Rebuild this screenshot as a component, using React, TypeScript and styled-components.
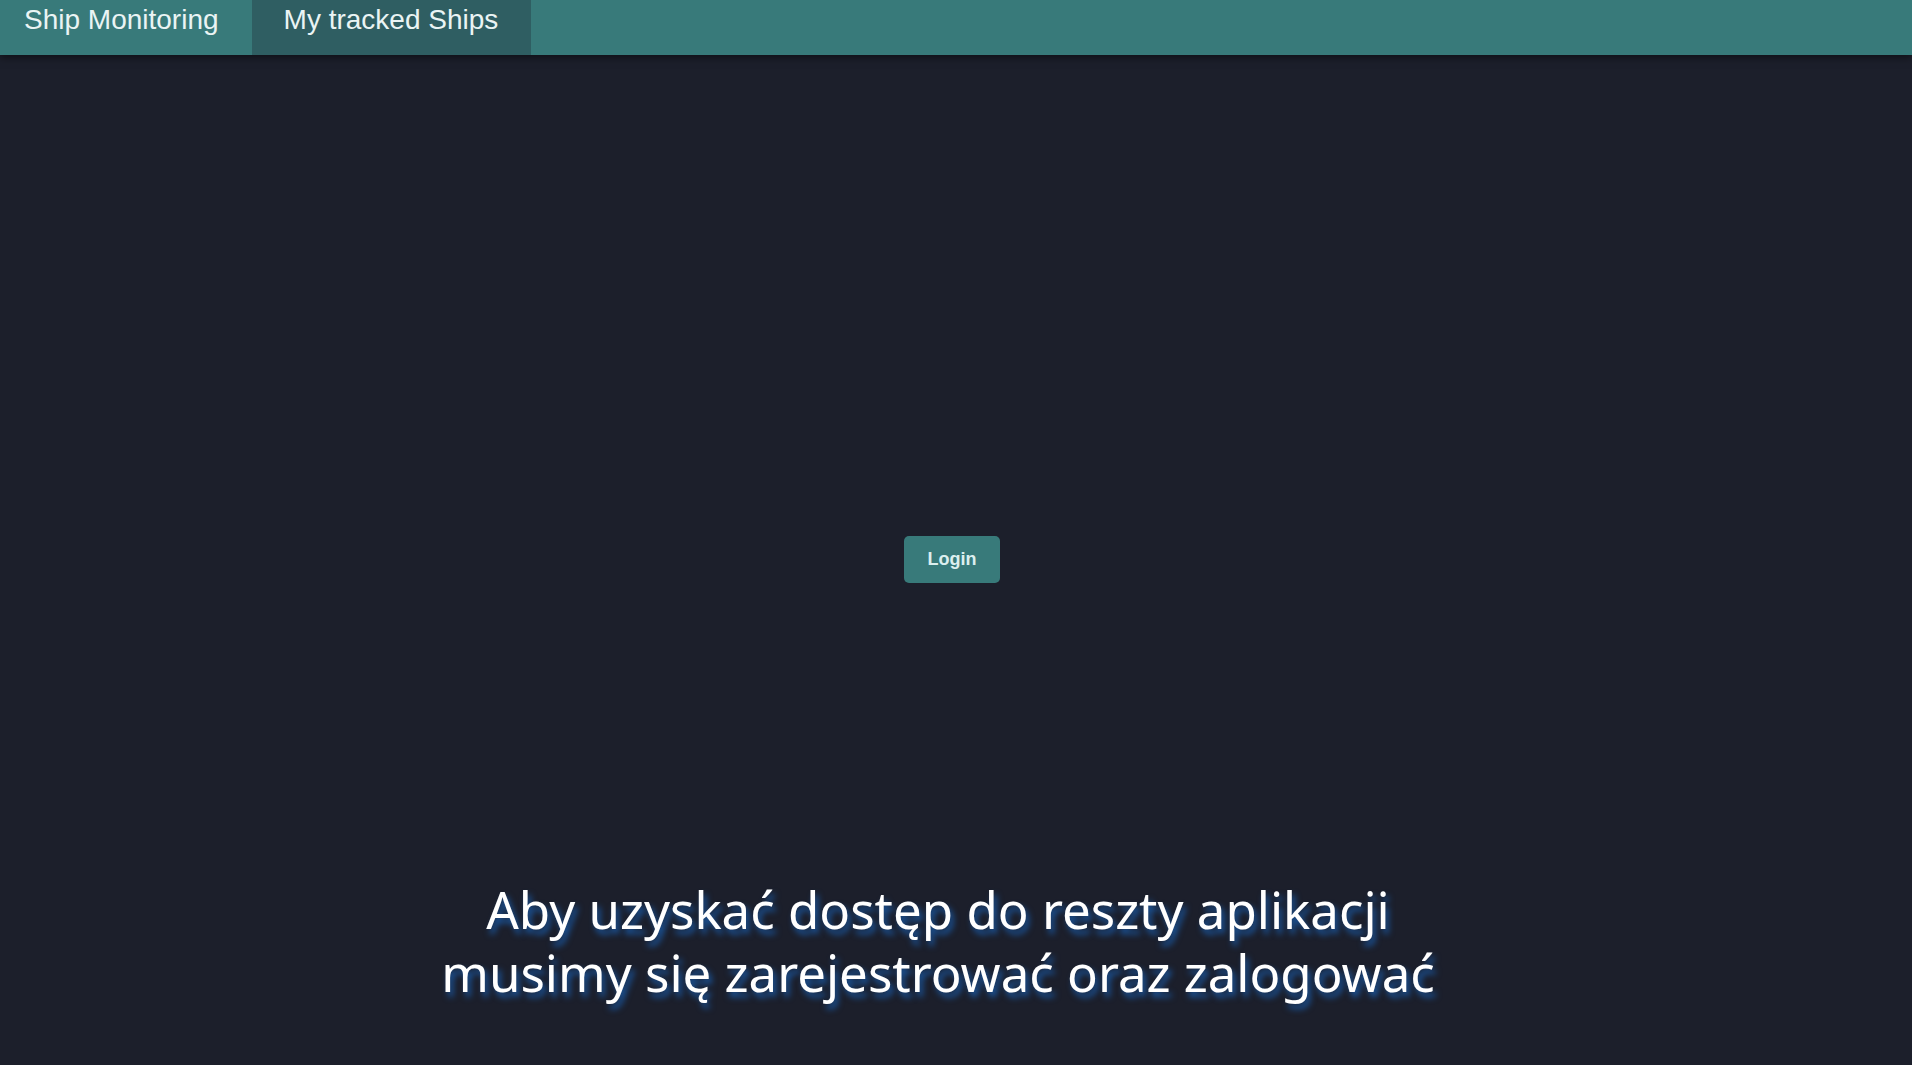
import React from "react";
import styled, { createGlobalStyle } from "styled-components";

const Global = createGlobalStyle`
  html, body {
    margin: 0;
    padding: 0;
    background: #1c1f2b;
    height: 100%;
  }
  #root { min-height: 100%; }
  * { box-sizing: border-box; }
`;

const Page = styled.div`
  min-height: 1065px;
  display: flex;
  flex-direction: column;
  background: #1c1f2b;
`;

const NavBar = styled.nav`
  height: 55px;
  display: flex;
  align-items: stretch;
  background: #387a7a;
  box-shadow: 0 2px 8px rgba(0, 0, 0, 0.55);
  position: relative;
  z-index: 1;
`;

const NavLink = styled.a<{ $active?: boolean; $first?: boolean }>`
  display: flex;
  align-items: flex-start;
  padding: 4px 33px 0 ${(p) => (p.$first ? "24px" : "32px")};
  font-family: "Liberation Sans", Arial, sans-serif;
  font-size: 28px;
  color: #eaf4f4;
  text-decoration: none;
  background: ${(p) => (p.$active ? "#2f5e62" : "transparent")};
  cursor: pointer;
`;

const Main = styled.main`
  flex: 1;
  display: flex;
  flex-direction: column;
  align-items: center;
  padding-top: 481px;
`;

const LoginButton = styled.button`
  width: 96px;
  height: 47px;
  margin-left: -8px;
  border: none;
  border-radius: 5px;
  background: #387a7a;
  color: #dcefef;
  font-family: "Liberation Sans", Arial, sans-serif;
  font-weight: 700;
  font-size: 18px;
  cursor: pointer;
`;

const Heading = styled.h1`
  margin: 295px 0 0;
  padding-right: 36px;
  text-align: center;
  font-family: "Noto Sans", "Open Sans", sans-serif;
  font-weight: 400;
  font-size: 51px;
  line-height: 63px;
  color: #ffffff;
  text-shadow: 3px 5px 6px #1a5aa6;
`;

export default function App() {
  return (
    <>
      <Global />
      <Page>
        <NavBar>
          <NavLink $first>Ship Monitoring</NavLink>
          <NavLink $active>My tracked Ships</NavLink>
        </NavBar>
        <Main>
          <LoginButton>Login</LoginButton>
          <Heading>
            Aby uzyskać dostęp do reszty aplikacji
            <br />
            musimy się zarejestrować oraz zalogować
          </Heading>
        </Main>
      </Page>
    </>
  );
}
